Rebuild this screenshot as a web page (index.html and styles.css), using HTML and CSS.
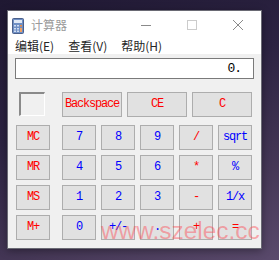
FILE: index.html
```html
<!DOCTYPE html>
<html>
<head>
<meta charset="utf-8">
<link rel="stylesheet" href="styles.css">
</head>
<body>
<div class="desk">
  <div class="window">
    <div class="titlebar">
      <svg class="appicon" width="12" height="16" viewBox="0 0 12 16">
        <rect x="0.5" y="0.5" width="11" height="15" rx="1" fill="#6f8fc4" stroke="#4a5f8a"/>
        <rect x="2" y="2" width="8" height="3" fill="#dfe8f5"/>
        <rect x="2" y="7" width="2" height="1.5" fill="#cfdcf0"/>
        <rect x="5" y="7" width="2" height="1.5" fill="#cfdcf0"/>
        <rect x="8" y="7" width="2" height="1.5" fill="#f08a3c"/>
        <rect x="2" y="10" width="2" height="1.5" fill="#cfdcf0"/>
        <rect x="5" y="10" width="2" height="1.5" fill="#cfdcf0"/>
        <rect x="8" y="10" width="2" height="4" fill="#f0a060"/>
        <rect x="2" y="12.5" width="2" height="1.5" fill="#cfdcf0"/>
        <rect x="5" y="12.5" width="2" height="1.5" fill="#cfdcf0"/>
      </svg>
      <span class="title">计算器</span>
      <div class="caption">
        <span class="cbtn"><svg width="10" height="10" viewBox="0 0 10 10"><line x1="0" y1="5.5" x2="10" y2="5.5" stroke="#8a8a8a" stroke-width="1"/></svg></span>
        <span class="cbtn"><svg width="10" height="10" viewBox="0 0 10 10"><rect x="0.5" y="0.5" width="9" height="9" fill="none" stroke="#cccccc" stroke-width="1"/></svg></span>
        <span class="cbtn"><svg width="10" height="10" viewBox="0 0 10 10"><path d="M0 0 L10 10 M10 0 L0 10" stroke="#8a8a8a" stroke-width="1"/></svg></span>
      </div>
    </div>
    <div class="menubar">
      <span class="mitem">编辑(E)</span>
      <span class="mitem">查看(V)</span>
      <span class="mitem">帮助(H)</span>
    </div>
    <div class="client">
      <div class="display">0.</div>
      <div class="keys">
        <div class="memind"></div>
        <div class="toprow">
          <button class="key red wide">Backspace</button>
          <button class="key red wide">CE</button>
          <button class="key red wide">C</button>
        </div>
        <button class="key red">MC</button>
        <button class="key blue">7</button>
        <button class="key blue">8</button>
        <button class="key blue">9</button>
        <button class="key red">/</button>
        <button class="key blue">sqrt</button>
        <button class="key red">MR</button>
        <button class="key blue">4</button>
        <button class="key blue">5</button>
        <button class="key blue">6</button>
        <button class="key red">*</button>
        <button class="key blue">%</button>
        <button class="key red">MS</button>
        <button class="key blue">1</button>
        <button class="key blue">2</button>
        <button class="key blue">3</button>
        <button class="key red">-</button>
        <button class="key blue">1/x</button>
        <button class="key red">M+</button>
        <button class="key blue">0</button>
        <button class="key blue">+/-</button>
        <button class="key blue">.</button>
        <button class="key red">+</button>
        <button class="key red">=</button>
      </div>
    </div>
  </div>
  <div class="watermark">www.szelec.cc</div>
</div>
</body>
</html>
```

FILE: styles.css
```css
* { box-sizing: border-box; }
html, body { margin: 0; padding: 0; }
body {
  width: 279px;
  height: 260px;
  overflow: hidden;
}
.desk {
  position: relative;
  width: 279px;
  height: 260px;
  background: linear-gradient(160deg, #1f1832 0%, #2c2342 40%, #463857 75%, #5a4a6c 100%);
  padding: 10px 0 0 7px;
}
.window {
  width: 255px;
  height: 239px;
  border: 1px solid #6a6a74;
  background: #f0f0f0;
  display: flex;
  flex-direction: column;
  box-shadow: 0 2px 8px rgba(0,0,0,0.35);
}
.titlebar {
  height: 27px;
  background: #ffffff;
  display: flex;
  align-items: center;
  flex: none;
}
.appicon {
  margin-left: 4px;
  margin-top: 2px;
  flex: none;
}
.title {
  margin-left: 7px;
  font-family: "Noto Sans CJK SC", sans-serif;
  font-size: 12px;
  color: #9a9a9a;
}
.caption {
  margin-left: auto;
  display: flex;
  height: 100%;
}
.cbtn {
  width: 46px;
  height: 100%;
  display: flex;
  align-items: center;
  justify-content: center;
}
.cbtn svg { display: block; }
.menubar {
  height: 16px;
  background: #ffffff;
  display: flex;
  align-items: center;
  flex: none;
}
.mitem {
  padding: 0 7px;
  font-family: "Noto Sans CJK SC", sans-serif;
  font-size: 12px;
  color: #262626;
  line-height: 16px;
}
.client {
  flex: 1;
  background: #f0f0f0;
  padding-top: 4px;
}
.display {
  margin-left: 7px;
  width: 239px;
  height: 21px;
  border: 1px solid #7a7a7a;
  background: #ffffff;
  text-align: right;
  padding-right: 12px;
  font-family: "Liberation Mono", monospace;
  font-size: 13px;
  letter-spacing: -1px;
  line-height: 19px;
  color: #000000;
}
.keys {
  margin-top: 13px;
  margin-left: 8px;
  display: grid;
  grid-template-columns: 41px repeat(5, 34px);
  grid-template-rows: 28px repeat(4, 25px);
  column-gap: 5px;
  row-gap: 5px;
}
.memind {
  width: 26px;
  height: 24px;
  margin-left: 3px;
  border-style: solid;
  border-width: 2px 1px 1px 2px;
  border-color: #8a8a8a #ffffff #ffffff #8a8a8a;
  background: #f0f0f0;
}
.toprow {
  grid-column: 2 / span 5;
  display: flex;
  gap: 5px;
  height: 25px;
}
.key {
  width: 34px;
  height: 25px;
  margin: 0;
  padding: 0;
  background: #e1e1e1;
  border: 1px solid #adadad;
  font-family: "Liberation Mono", monospace;
  font-size: 12px;
  letter-spacing: -1.2px;
  line-height: 23px;
  text-align: center;
}
.key.wide { flex: 1; width: auto; }
.red { color: #ff0000; }
.blue { color: #0000ff; }
.watermark {
  position: absolute;
  left: 101px;
  top: 217px;
  font-family: "Liberation Sans", sans-serif;
  font-size: 24.4px;
  line-height: 28px;
  color: rgba(255, 60, 70, 0.42);
  white-space: nowrap;
  pointer-events: none;
}
```
